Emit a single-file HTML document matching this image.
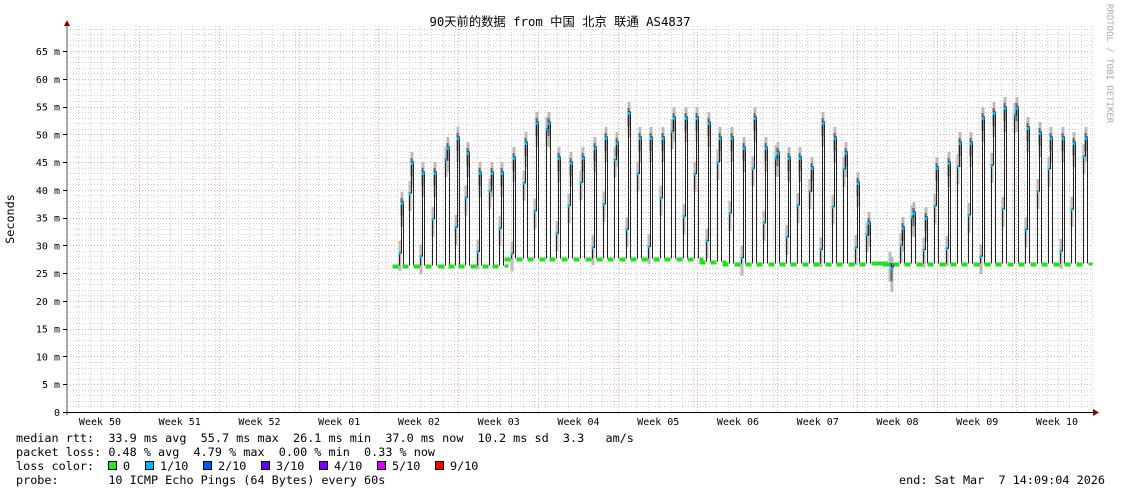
<!DOCTYPE html>
<html><head><meta charset="utf-8"><style>
body{margin:0;background:#fff;width:1121px;height:494px;overflow:hidden}
svg{display:block}
text{font-family:"DejaVu Sans Mono","Liberation Mono","Noto Sans CJK SC",monospace;font-size:11.8px;fill:#000}
.ax{font-size:10px}
</style></head><body>
<svg id="g" width="1121" height="494" xmlns="http://www.w3.org/2000/svg">
<text x="560" y="26" text-anchor="middle" style="font-size:12.3px">90天前的数据 from 中国 北京 联通 AS4837</text>
<text transform="translate(1107,4) rotate(90)" style="font-size:9px;fill:#aaa">RRDTOOL / TOBI OETIKER</text>
<text transform="translate(14,219) rotate(-90)" text-anchor="middle">Seconds</text>
<g id="grid"></g>
<g id="data"></g>
<line x1="67" y1="22" x2="67" y2="415" stroke="#555" stroke-width="1"/>
<line x1="63" y1="412.5" x2="1095" y2="412.5" stroke="#000" stroke-width="1"/>
<polygon points="64,26 70,26 67,20" fill="#800"/>
<polygon points="1093,409 1093,416 1099,412.5" fill="#800"/>
<g id="lbl"></g>
<text x="16" y="442" xml:space="preserve">median rtt:  33.9 ms avg  55.7 ms max  26.1 ms min  37.0 ms now  10.2 ms sd  3.3   am/s</text>
<text x="16" y="456" xml:space="preserve">packet loss: 0.48 % avg  4.79 % max  0.00 % min  0.33 % now</text>
<text x="16" y="470" xml:space="preserve">loss color:  </text>
<text x="16" y="484" xml:space="preserve">probe:       10 ICMP Echo Pings (64 Bytes) every 60s</text>
<text x="1105" y="484" text-anchor="end" xml:space="preserve">end: Sat Mar  7 14:09:04 2026</text>
<g id="leg"></g>
</svg>
<script>
var NS="http://www.w3.org/2000/svg";
function el(p,t,a){var e=document.createElementNS(NS,t);for(var k in a)e.setAttribute(k,a[k]);p.appendChild(e);return e;}
var G=document.getElementById('grid'),D=document.getElementById('data'),L=document.getElementById('lbl'),LG=document.getElementById('leg');
function Y(m){return 412-m*(361/65);}
for(var m=1;m<=69;m++){var y=Math.round(Y(m))+0.5;var maj=m%5==0;
 el(G,'line',{x1:67,x2:1093,y1:y,y2:y,stroke:maj?'#f0a0a0':'#d0d0d0','stroke-dasharray':'1,2','stroke-width':1});}
var wk=79.75;
for(var x=67+11.39;x<1093;x+=11.39){var xx=Math.round(x)+0.5;el(G,'line',{x1:xx,x2:xx,y1:26,y2:412,stroke:'#d0d0d0','stroke-dasharray':'1,2'});}
var weeks=['Week 50','Week 51','Week 52','Week 01','Week 02','Week 03','Week 04','Week 05','Week 06','Week 07','Week 08','Week 09','Week 10'];
for(var i=0;i<13;i++){var xr=Math.round(139+i*wk)+0.5;if(i<12)el(G,'line',{x1:xr,x2:xr,y1:26,y2:412,stroke:'#f0a0a0','stroke-dasharray':'1,2'});
 var t=el(L,'text',{x:100+i*wk,y:425,'text-anchor':'middle','class':'ax'});t.textContent=weeks[i];}
for(var v=0;v<=65;v+=5){var t=el(L,'text',{x:60,y:Y(v)+4,'text-anchor':'end','class':'ax'});t.textContent=v==0?'0':v+' m';
 el(L,'line',{x1:63,x2:67,y1:Math.round(Y(v))+.5,y2:Math.round(Y(v))+.5,stroke:'#000'});}
var xs=[399,409,420,432,445,455,465,477,489,499,511,523,534,546,556,568,580,592,603,614,626,637,648,660,671,683,694,706,717,729,741,752,763,775,786,797,809,820,832,843,855,866,889,900,911,923,934,946,957,968,980,991,1002,1014,1025,1037,1048,1060,1071,1083];
var pk=[190,150,160,160,135,125,140,160,160,160,145,130,110,110,145,150,145,135,125,130,100,125,125,125,105,105,105,110,125,125,135,105,135,140,145,145,155,110,125,140,170,210,255,215,200,205,155,150,130,130,105,100,95,95,115,120,125,125,130,125];
var mids=[.2,.7,.1,.5,.9,.3,.6,.15,.8,.4,.05,.65,.35,.95,.25,.55,.75,.1,.45,.85];
for(var i=0;i<xs.length;i++){var x=xs[i]+.5,p=pk[i]+12;var base=x<500?265.5:(x<700?258.5:263.5);if(x>=700&&x<720)base=261.5;
 var md=base-(base-p)*mids[i%20];
 el(D,'rect',{x:x+1,y:p-10,width:3,height:35,fill:'#bbb'});
 el(D,'rect',{x:x-1,y:md-12,width:3,height:30,fill:'#bbb'});
 el(D,'rect',{x:x+1,y:p-4,width:2,height:18,fill:'#666'});
 el(D,'polyline',{points:x+','+base+' '+x+','+md+' '+(x+2)+','+md+' '+(x+2)+','+p+' '+(x+4)+','+p+' '+(x+4)+','+base,fill:'none',stroke:'#222','stroke-width':1});
 el(D,'rect',{x:x+1,y:p,width:3,height:3,fill:'#00b8ff'});
 el(D,'rect',{x:x-1,y:md-1,width:2,height:3,fill:'#00b8ff'});
 el(D,'rect',{x:x-7,y:base-1,width:6,height:4,fill:'#20e020'});
 el(D,'rect',{x:x+5,y:base-1,width:4,height:3,fill:'#20e020'});}
el(D,'rect',{x:872,y:261.5,width:16,height:4,fill:'#20e020'});
var cols=['#20ee20','#00b8ff','#0059ff','#5e00ff','#7e00ff','#dd00ff','#ff0000'],lab=['0','1/10','2/10','3/10','4/10','5/10','9/10'],lx=[108,145,203,261,319,377,435];
for(var i=0;i<7;i++){el(LG,'rect',{x:lx[i]+.5,y:461.5,width:8,height:8,fill:cols[i],stroke:'#000'});var t=el(LG,'text',{x:lx[i]+15,y:470});t.textContent=lab[i];}
</script>
</body></html>
